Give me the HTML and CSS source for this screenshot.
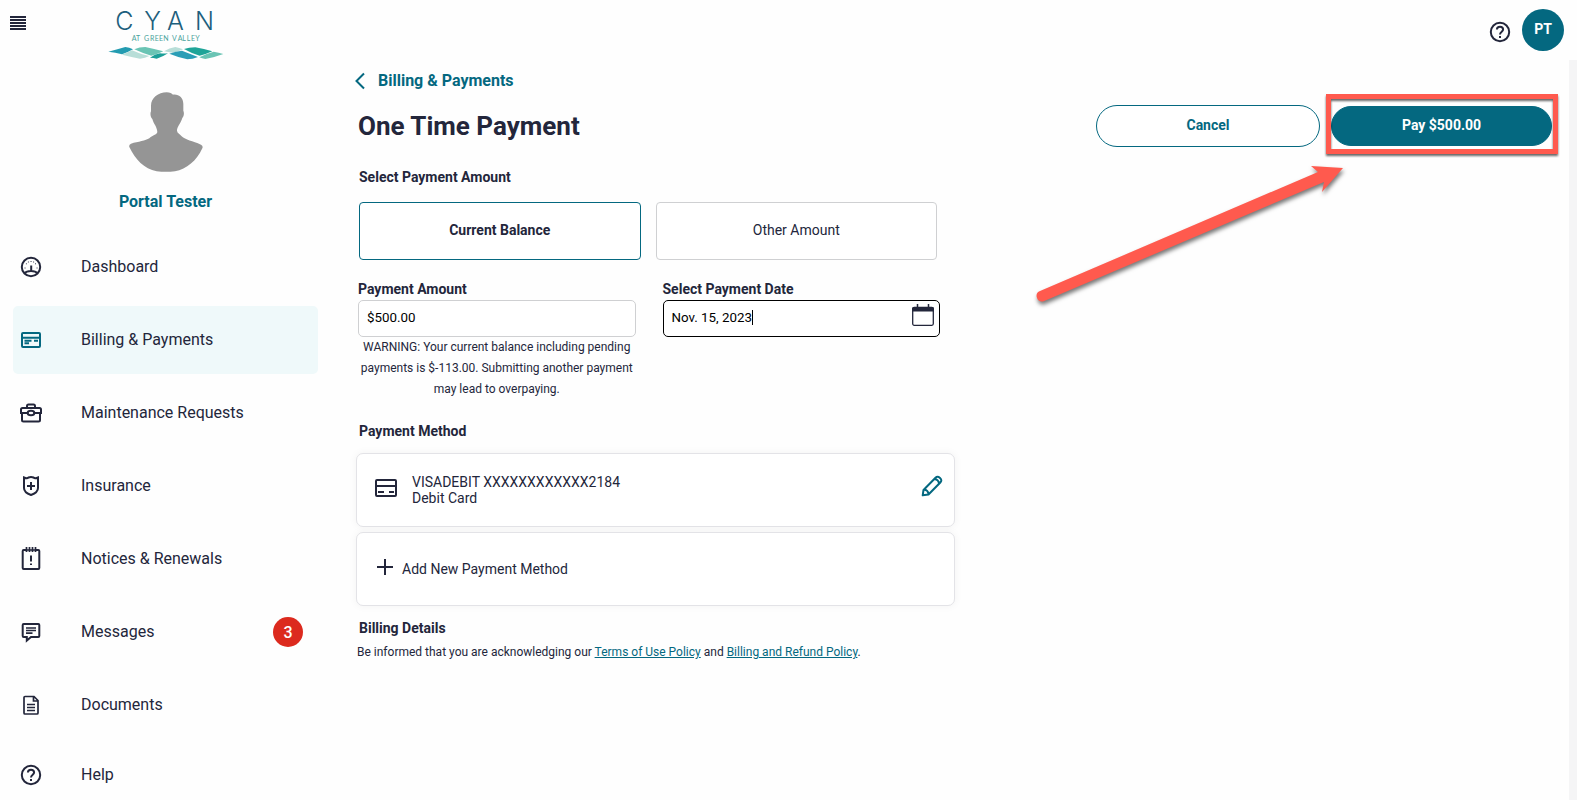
FILE: index.html
```html
<!DOCTYPE html>
<html lang="en">
<head>
<meta charset="utf-8">
<meta name="viewport" content="width=device-width, initial-scale=1">
<title>One Time Payment</title>
<link rel="stylesheet" href="styles.css">
</head>
<body>
<div class="app">
  <aside class="sidebar">
    <div class="brand">
      <button class="icon-button" type="button" aria-label="Menu">
        <svg width="16" height="14" viewBox="0 0 16 14" fill="currentColor"><path d="M0 0h16v2H0zM0 3h16v2H0zM0 6h16v2H0zM0 9h16v2H0zM0 12h16v2H0z"/></svg>
      </button>
      <svg class="logo" width="116" height="60" viewBox="324 0 348 180" role="img" aria-label="Cyan at Green Valley">
        <text class="logo-name" x="346 433 501 585" y="89">CYAN</text>
        <text class="logo-tag" x="395 408 424 432 450 464 477 490 505 516 533 547 560 573 586" y="123">AT GREEN VALLEY</text>
        <path fill="#239bb0" d="M325 155Q352 148 376 141Q388 142 399 148Q384 157 366 163Q346 157 325 155z"/>
        <path fill="#b8ded8" d="M366 164Q382 158 396 151Q424 164 448 168Q436 175 420 176Q390 170 366 164z"/>
        <path fill="#6ac4b4" d="M403 148Q418 141 436 141Q464 147 490 154Q472 163 454 167Q428 160 403 148z"/>
        <path fill="#1b9f98" d="M450 173Q464 162 480 160Q492 161 504 160Q488 171 470 176Q460 173 450 173z"/>
        <path fill="#b8ded8" d="M492 154Q508 143 526 141Q538 143 549 148Q534 156 518 158Q504 157 492 154z"/>
        <path fill="#2a9eb6" d="M508 161Q528 154 546 152Q572 162 594 171Q578 178 562 178Q532 171 508 161z"/>
        <path fill="#1fa498" d="M552 147Q566 142 586 142Q612 147 637 154Q618 163 599 167Q574 160 552 147z"/>
        <path fill="#6ac4b4" d="M598 172Q620 160 641 155Q656 158 670 162Q644 172 616 177Q606 175 598 172z"/>
      </svg>
    </div>
    <div class="profile">
      <svg width="74" height="80" viewBox="387 277 222 240" aria-hidden="true"><path fill="#959595" d="M500 278C510 278 515 281 519 285C537 283 550 295 550 313V333C553 340 552 349 547 355C543 370 531 382 531 393C532 401 539 402 545 410C556 421 578 424 603 435Q610 439 607 446C590 483 560 509 525 515Q498 518 470 515C432 507 406 480 388 442Q386 435 393 432C415 426 437 423 448 416C456 407 471 405 472 397C471 381 461 373 457 358C451 352 450 341 453 335V318C453 295 475 278 500 278z"/></svg>
      <strong class="profile-name">Portal Tester</strong>
    </div>
    <nav class="nav">
      <a class="nav-item" href="#"><svg class="nav-icon" viewBox="0 0 24 24"><circle cx="12" cy="12" r="9.200"/><path d="M5.500 18.200C8 15.300 16 15.300 18.500 18.200M12.200 15.500V10.500"/><path class="dots" d="M6 13h.1M7.300 8.800h.1M12 6.500h.1M16.500 8.800h.1M18 13h.1M9.300 7h.1M14.600 7h.1"/></svg><span class="nav-label">Dashboard</span></a>
      <a class="nav-item active" href="#" aria-current="page"><svg class="nav-icon" viewBox="0 0 24 24"><rect x="3" y="5" width="18" height="14" rx="1"/><path d="M3 9.700h18M5.500 12.700h7M15 12.700h4M5.500 15.200h4.500"/></svg><span class="nav-label">Billing &amp; Payments</span></a>
      <a class="nav-item" href="#"><svg class="nav-icon" viewBox="0 0 24 24"><path d="M8 7V5q0-1.500 1.500-1.500h5Q16 3.500 16 5v2M3.500 7h17Q22 7 22 8.500v3.500h-6.500M8.500 12H2V8.500Q2 7 3.500 7M3 12v7q0 1.500 1.500 1.500h15Q21 20.500 21 19v-7"/><ellipse cx="12" cy="12" rx="3.300" ry="2.200"/></svg><span class="nav-label">Maintenance Requests</span></a>
      <a class="nav-item" href="#"><svg class="nav-icon" viewBox="0 0 24 24"><path d="M5 3.500Q8 5 9.500 3.500Q12 2.300 14.500 3.500Q16 5 19 3.500V14Q19 18.500 12 21Q5 18.500 5 14zM12 8v8M8 12h8"/></svg><span class="nav-label">Insurance</span></a>
      <a class="nav-item" href="#"><svg class="nav-icon" viewBox="0 0 24 24"><path d="M7 3H4.700q-1 0-1 1v17q0 1 1 1h14.600q1 0 1-1V4q0-1-1-1H17"/><path class="medium" d="M6 3h12M7.500 0v5M10.500 0v5M13.500 0v5M16.500 0v5"/><path d="M12 8.500v6M12 16.500v1.500"/></svg><span class="nav-label">Notices &amp; Renewals</span></a>
      <a class="nav-item" href="#"><svg class="nav-icon" viewBox="0 0 24 24"><path d="M4.700 4h14.600q1 0 1 1v11q0 1-1 1H12l-4.200 3.500V17H4.700q-1 0-1-1V5q0-1 1-1z"/><path class="medium" d="M7 8h10M7 10.500h10M7 13.200h6.500"/></svg><span class="nav-label">Messages</span><span class="badge">3</span></a>
      <a class="nav-item" href="#"><svg class="nav-icon" viewBox="0 0 24 24"><path class="medium" d="M6 3.500h9l4 4v12.500q0 1-1 1H6q-1 0-1-1v-15.500q0-1 1-1zM14.500 4v4H19"/><path class="thin" d="M8 11.500h8M8 14.500h8M8 17.500h8"/></svg><span class="nav-label">Documents</span></a>
      <a class="nav-item last" href="#"><svg class="nav-icon" viewBox="0 0 24 24"><circle cx="12" cy="12" r="9.200"/><path d="M8.900 9.500Q9 6.700 12 6.700T15.100 9.500C15.100 11.700 12 11.700 12 14.500M12 16v2"/></svg><span class="nav-label">Help</span></a>
    </nav>
  </aside>

  <div class="page">
    <header class="topbar">
      <button class="icon-button" type="button" aria-label="Help"><svg class="nav-icon" viewBox="0 0 24 24"><circle cx="12" cy="12" r="9.200"/><path d="M8.900 9.500Q9 6.700 12 6.700T15.100 9.500C15.100 11.700 12 11.700 12 14.500M12 16v2"/></svg></button>
      <button class="user" type="button" aria-label="Account PT">PT</button>
    </header>
    <main class="content">
      <a class="back" href="#"><svg width="10" height="18" viewBox="0 0 10 18" fill="none" stroke="currentColor" stroke-width="2"><path d="M9 1.500L1.500 9L9 16.500"/></svg><span>Billing &amp; Payments</span></a>
      <div class="title-row">
        <h1>One Time Payment</h1>
        <div class="actions">
          <button class="pill" type="button">Cancel</button>
          <div class="callout">
            <button class="pill primary" type="submit" form="payment">Pay $500.00</button>
            <svg class="arrow" width="320" height="150" viewBox="1030 160 320 150" aria-hidden="true"><path d="M1040 291L1318 172L1311 166L1343 168L1322 192L1324 182L1043 301.500A5.500 5.500 0 0 1 1040 291z"/></svg>
          </div>
        </div>
      </div>

      <form class="form" id="payment">
        <h2>Select Payment Amount</h2>
        <div class="choices">
          <button class="choice selected" type="button" aria-pressed="true">Current Balance</button>
          <button class="choice" type="button" aria-pressed="false">Other Amount</button>
        </div>
        <div class="fields">
          <div class="field">
            <label for="amount">Payment Amount</label>
            <input id="amount" type="text" value="$500.00">
            <p class="warning">WARNING: Your current balance including pending payments is $-113.00. Submitting another payment may lead to overpaying.</p>
          </div>
          <div class="field">
            <label for="date">Select Payment Date</label>
            <div class="date">
              <input id="date" type="text" value="Nov. 15, 2023">
              <span class="caret"></span>
              <button class="icon-button calendar" type="button" aria-label="Open calendar"><svg width="22" height="22" viewBox="0 0 22 22" fill="none" stroke="currentColor"><rect x=".7" y="3.500" width="20.600" height="17.800" rx="1.500" stroke-width="1.300"/><path fill="currentColor" stroke="none" d="M0 7.500V4.500Q0 3 1.500 3h19Q22 3 22 4.500v3z"/><path stroke-width="1.500" d="M5.500 0v4M16.500 0v4"/></svg></button>
            </div>
          </div>
        </div>
        <h2>Payment Method</h2>
        <div class="methods">
          <div class="card">
            <svg class="card-icon" width="24" height="20" viewBox="0 0 24 20" fill="none" stroke="currentColor" stroke-width="2"><rect x="2" y="2" width="20" height="16" rx="1"/><path d="M2 8h20M4 14h6M15 14h5"/></svg>
            <div class="card-text">VISADEBIT XXXXXXXXXXXX2184<br>Debit Card</div>
            <button class="icon-button edit" type="button" aria-label="Edit payment method"><svg width="22" height="22" viewBox="0 0 22 22" fill="none" stroke="currentColor" stroke-width="2" stroke-linejoin="round"><path d="M1.700 20.300L2.500 15L14.500 2.700Q16.500.8 19 3T19.300 7.500L7.500 19.500zM3 14.500Q7 15 7.500 19M13.500 4Q17.500 4.500 18 8.500"/></svg></button>
          </div>
          <button class="card add" type="button">
            <svg class="plus" width="16" height="16" viewBox="0 0 16 16" fill="none" stroke="currentColor" stroke-width="2"><path d="M8 0v16M0 8h16"/></svg>
            <span>Add New Payment Method</span>
          </button>
        </div>
        <h2>Billing Details</h2>
        <p class="legal">Be informed that you are acknowledging our <a href="#">Terms of Use Policy</a> and <a href="#">Billing and Refund Policy</a>.</p>
      </form>
    </main>
  </div>
</div>
</body>
</html>
```
FILE: styles.css
```css
* { box-sizing: border-box; }

:root {
  --ink: #23263b;
  --teal: #046880;
  --line: #cfd0d2;
  --red: #ff5a4e;
}

body {
  margin: 0;
  background: #fefefe;
  color: var(--ink);
  font-family: Roboto, "Liberation Sans", sans-serif;
  font-size: 14px;
}

h1, h2, p { margin: 0; }
button { font: inherit; color: inherit; cursor: pointer; }
input { font-family: inherit; }

.app {
  display: grid;
  grid-template-columns: 331px 1fr;
  height: 100vh;
  overflow: hidden;
}

.sidebar { overflow: hidden; }

.brand {
  display: grid;
  grid-template-columns: 1fr auto 1fr;
  align-items: start;
  padding: 0 10px;
}

.icon-button {
  display: flex;
  padding: 0;
  border: 0;
  background: none;
  justify-self: start;
}

.brand .icon-button { padding-top: 16px; }

.logo { display: block; }

.logo-name {
  font-family: Inter, sans-serif;
  font-weight: 300;
  font-size: 75px;
  fill: #1d5f7d;
}

.logo-tag {
  font-family: Lato, sans-serif;
  font-size: 21px;
  fill: #4aa39c;
}

.profile {
  display: flex;
  flex-direction: column;
  align-items: center;
  gap: 20px;
  padding-top: 32px;
}

.profile-name {
  color: var(--teal);
  font-size: 16px;
  line-height: 20px;
}

.nav {
  display: flex;
  flex-direction: column;
  gap: 5px;
  padding: 21px 13px 0;
}

.nav-item {
  display: grid;
  grid-template-columns: 36px 1fr auto;
  column-gap: 32px;
  align-items: center;
  min-height: 68px;
  padding-right: 15px;
  border-radius: 5px;
  color: var(--ink);
  font-size: 16px;
  text-decoration: none;
}

.nav-item.last { min-height: 62px; }
.nav-item.active { background: #eff9fa; }
.nav-item.active .nav-icon { color: var(--teal); }
.nav-label { padding-bottom: 2px; }

.nav-icon {
  width: 24px;
  height: 24px;
  justify-self: center;
  fill: none;
  stroke: currentColor;
  stroke-width: 2;
}

.dots { stroke-linecap: round; stroke-width: 1; }
.thin { stroke-width: 1.4; }
.medium { stroke-width: 1.7; }

.badge {
  display: grid;
  place-items: center;
  width: 30px;
  height: 30px;
  border-radius: 50%;
  background: #dc2a1e;
  color: #fff;
  font-weight: 500;
}

.page {
  display: flex;
  flex-direction: column;
  min-width: 0;
}

.topbar {
  display: flex;
  justify-content: flex-end;
  align-items: center;
  gap: 10px;
  height: 60px;
  padding-right: 13px;
}

.topbar .icon-button { padding-top: 4px; }

.user {
  width: 42px;
  height: 42px;
  padding: 0 0 2px;
  border: 0;
  border-radius: 50%;
  background: var(--teal);
  color: #fff;
  font-weight: 700;
}

.content {
  flex: 1;
  padding: 11px 17px 0 24px;
  border-right: 8px solid #f5f5f6;
}

.back {
  display: inline-flex;
  align-items: center;
  gap: 13px;
  color: var(--teal);
  font-size: 16px;
  font-weight: 700;
  line-height: 20px;
  text-decoration: none;
}

.title-row {
  display: flex;
  justify-content: space-between;
  align-items: center;
  margin-top: 12px;
  padding-left: 3px;
}

h1 { font-size: 26px; line-height: 32px; }

.actions {
  display: flex;
  align-items: center;
  gap: 11px;
}

.pill {
  display: block;
  width: 224px;
  height: 42px;
  padding: 0 0 2px;
  border: 1px solid var(--teal);
  border-radius: 21px;
  background: #fff;
  color: var(--teal);
  font-weight: 700;
}

.pill.primary {
  width: 221px;
  height: 40px;
  background: var(--teal);
  color: #fff;
}

.callout { position: relative; }

.callout::after {
  content: "";
  position: absolute;
  inset: -12px -6px -8px -5px;
  border: 5px solid var(--red);
  filter: drop-shadow(0 2px 1px #0009);
  pointer-events: none;
}

.arrow {
  position: absolute;
  top: 54px;
  right: 202px;
  fill: var(--red);
  filter: drop-shadow(1px 3px 2px #0008);
  pointer-events: none;
}

.form {
  max-width: 600px;
  padding: 20px 0 0 1px;
}

h2 {
  padding-left: 3px;
  font-size: 14px;
  line-height: 20px;
}

.choices {
  display: grid;
  grid-template-columns: 1fr 1fr;
  gap: 15px;
  padding: 15px 18px 0 3px;
}

.choice {
  height: 58px;
  padding-bottom: 3px;
  border: 1px solid var(--line);
  border-radius: 4px;
  background: #fff;
}

.choice.selected { border-color: var(--teal); font-weight: 700; }

.fields {
  display: grid;
  grid-template-columns: 1fr 1fr;
  gap: 27px;
  padding: 19px 15px 0 2px;
}

.field label {
  display: block;
  font-weight: 700;
  line-height: 21px;
}

.field input {
  display: block;
  width: 100%;
  height: 37px;
  padding: 0 8px 2px;
  border: 1px solid var(--line);
  border-radius: 5px;
  background: #fff;
  color: #000;
}

.date { position: relative; }
.date input { border-color: #000; }

.caret {
  position: absolute;
  top: 10px;
  left: 89px;
  width: 1px;
  height: 15px;
  background: #000;
}

.calendar {
  position: absolute;
  top: 4px;
  right: 6px;
}

.warning {
  font-size: 12px;
  line-height: 21px;
  text-align: center;
}

.fields + h2 { margin-top: 21px; }

.methods {
  display: flex;
  flex-direction: column;
  gap: 5px;
  margin: 12px 0;
}

.card {
  display: flex;
  align-items: center;
  gap: 14px;
  min-height: 74px;
  padding: 0 11px 0 17px;
  border: 1px solid #e3e3e7;
  border-radius: 7px;
  background: #fff;
  box-shadow: 0 0 8px #0000000d;
  line-height: 16px;
  text-align: left;
}

.card-icon { margin-top: -4px; }

.edit {
  margin-left: auto;
  padding-bottom: 8px;
  color: var(--teal);
}

.add { gap: 9px; padding-left: 20px; }
.plus { margin-top: -4px; }

.legal {
  margin-top: 4px;
  padding-left: 1px;
  font-size: 12px;
  line-height: 20px;
}

.legal a { color: var(--teal); }
```
